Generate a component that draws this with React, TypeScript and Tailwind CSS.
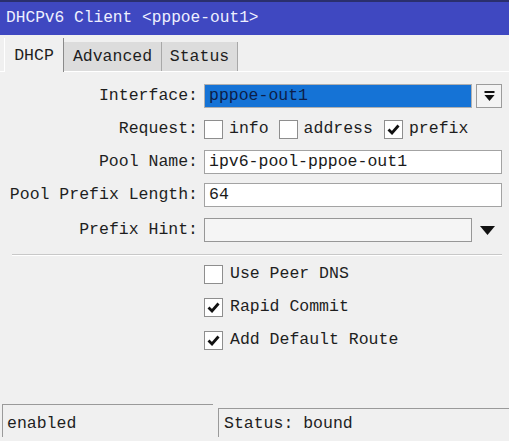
import React from 'react';

const mono = { fontFamily: '"Liberation Mono", "DejaVu Sans Mono", monospace' };

function Check({ checked }: { checked?: boolean }) {
    return (
        <div className="w-[19px] h-[19px] shrink-0 bg-white border border-[#8e8e8e] flex items-center justify-center">
            {checked && (
                <svg width="13" height="11" viewBox="0 0 13 11">
                    <path d="M1.5 5.5 L5 9 L11.5 1.5" fill="none" stroke="#111" strokeWidth="2.8" />
                </svg>
            )}
        </div>
    );
}

function Field({ value, className = '' }: { value?: string; className?: string }) {
    return (
        <div className={`h-[24px] border flex items-center px-[4px] text-[#1a1a1a] ${className}`}>
            {value}
        </div>
    );
}

export default function App() {
    return (
        <div className="w-[509px] h-[441px] bg-[#f0f0f0] flex flex-col text-[16.5px] leading-none text-[#1e1e1e] overflow-hidden" style={mono}>
            {/* title bar */}
            <div className="h-[35px] shrink-0 bg-[#3f48c1] border-t-2 border-[#2a2f6e] flex items-center pl-[6px] text-[16.2px] text-[#eef0ff]">
                DHCPv6 Client &lt;pppoe-out1&gt;
            </div>

            {/* tabs */}
            <div className="h-[37px] shrink-0 flex items-end pl-[4px] border-b border-white">
                <div className="h-[34px] w-[60px] flex items-center justify-center pt-[3px] bg-[#f0f0f0] border-l border-white border-r border-r-[#8a8a8a] -mb-px">
                    DHCP
                </div>
                <div className="h-[29px] w-[98px] flex items-center justify-center pt-[2px] bg-[#dcdcdc] border-r border-[#a8a8a8]">
                    Advanced
                </div>
                <div className="h-[29px] w-[76px] flex items-center justify-center pt-[2px] bg-[#dcdcdc] border-r border-[#a8a8a8]">
                    Status
                </div>
            </div>

            {/* form */}
            <div className="pt-[12px] pl-[6px] pr-[7px]">
                <div className="grid grid-cols-[192px_1fr] gap-x-[6px] gap-y-[9px] items-center">
                    <div className="text-right">Interface:</div>
                    <div className="flex items-center gap-[4px]">
                        <div className="flex-1 h-[24px] bg-[#1573d6] border border-[#b0b0b0] flex items-center px-[4px] text-[#0c1e4a]">
                            pppoe-out1
                        </div>
                        <div className="w-[26px] h-[24px] bg-[#f4f4f4] border border-[#9c9c9c] flex items-center justify-center">
                            <svg width="11" height="11" viewBox="0 0 11 11">
                                <rect x="0.5" y="0" width="10" height="2" fill="#111" />
                                <path d="M0.5 4 H10.5 L5.5 10 Z" fill="#111" />
                            </svg>
                        </div>
                    </div>

                    <div className="text-right h-[24px] flex items-center justify-end">Request:</div>
                    <div className="flex items-center h-[24px]">
                        <Check />
                        <span className="ml-[6px] mr-[10px]">info</span>
                        <Check />
                        <span className="ml-[6px] mr-[11px]">address</span>
                        <Check checked />
                        <span className="ml-[6px]">prefix</span>
                    </div>

                    <div className="text-right">Pool Name:</div>
                    <Field value="ipv6-pool-pppoe-out1" className="bg-white border-[#a3a3a3]" />

                    <div className="text-right">Pool Prefix Length:</div>
                    <Field value="64" className="bg-white border-[#a3a3a3]" />

                    <div className="text-right mt-[2px]">Prefix Hint:</div>
                    <div className="flex items-center mt-[2px]">
                        <Field className="flex-1 bg-[#f5f5f5] border-[#979797]" />
                        <div className="w-[30px] flex justify-center">
                            <svg width="15" height="9" viewBox="0 0 15 9">
                                <path d="M0 0 H15 L7.5 9 Z" fill="#111" />
                            </svg>
                        </div>
                    </div>
                </div>

                <div className="mt-[12px] ml-[6px] border-t border-[#c8c8c8] border-b border-b-white" />

                <div className="mt-[6px] pl-[198px] flex flex-col gap-[9px]">
                    <div className="flex items-center h-[24px] gap-[7px]"><Check /><span>Use Peer DNS</span></div>
                    <div className="flex items-center h-[24px] gap-[7px]"><Check checked /><span>Rapid Commit</span></div>
                    <div className="flex items-center h-[24px] gap-[7px]"><Check checked /><span>Add Default Route</span></div>
                </div>
            </div>

            <div className="flex-1" />

            {/* status bar */}
            <div className="h-[37px] shrink-0 flex items-end pl-[2px] pb-[4px]">
                <div className="w-[211px] h-[33px] border-t border-l border-[#9a9a9a] flex items-center pl-[4px] pt-[6px]">
                    enabled
                </div>
                <div className="ml-[5px] flex-1 h-[29px] border-t border-l border-[#9a9a9a] flex items-center pl-[5px] pt-[2px]">
                    Status: bound
                </div>
            </div>
        </div>
    );
}
